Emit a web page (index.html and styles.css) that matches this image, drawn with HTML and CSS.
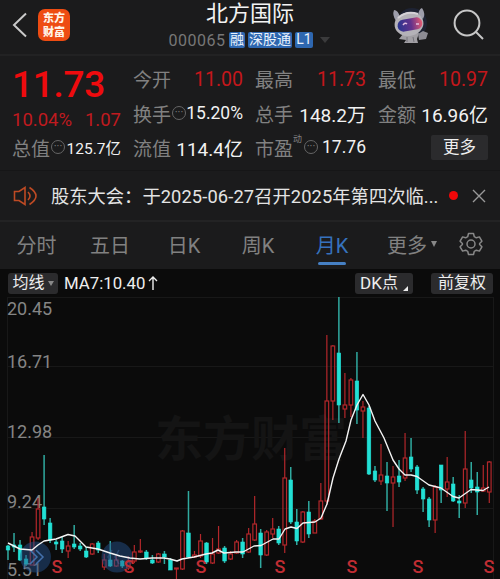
FILE: index.html
```html
<!DOCTYPE html>
<html lang="zh-CN">
<head>
    <meta charset="UTF-8">
    <meta name="viewport" content="width=device-width, initial-scale=1.0">
    <title>北方国际 000065</title>
    <link rel="stylesheet" href="styles.css">
</head>
<body>
<div class="app">
    <header class="header">
        <svg class="back" viewBox="0 0 16 26"><path d="M14 1.5L2 13l12 11.5"/></svg>
        <div class="logo">东方<br>财富</div>
        <div class="title">
            <h1>北方国际</h1>
            <div class="code"><span class="num">000065</span><b>融</b><b>深股通</b><b class="level">L1</b><i class="caret"></i></div>
        </div>
        <svg class="robot" viewBox="0 0 42 40">
            <defs>
                <linearGradient id="visor"><stop offset="0" stop-color="#29358f"/><stop offset=".55" stop-color="#63328c"/><stop offset="1" stop-color="#e65b72"/></linearGradient>
            </defs>
            <circle cx="23" cy="17" r="15" fill="#1e2333"/>
            <path d="M7 15Q3 9 5 4q4 0 6 7M29 9q1-6 4-7 4 6 1 11" fill="#9d9daa"/>
            <path d="M14 28l-4 5 7 1-2 3h14l-1-4 2-6z" fill="#a19fa4"/>
            <path d="M29 28l5-3 5 2-2 6-7 1z" fill="#8d8c93"/>
            <ellipse cx="20" cy="18" rx="14.500" ry="12" transform="rotate(-10 20 18)" fill="#b4b2b8"/>
            <path d="M9 12q9-8 20-4" fill="none" stroke="#d4d1d6" stroke-width="2"/>
            <rect x="8.500" y="12.500" width="25" height="12" rx="6" transform="rotate(-10 21 19)" fill="url(#visor)"/>
            <path d="M14 19q2-3 4-1M27 18h3" fill="none" stroke="#e3bee0" stroke-width="1.4"/>
            <path d="M18 31v5M24 31l1 5" stroke="#74737b"/>
        </svg>
        <svg class="search" viewBox="0 0 32 32"><circle cx="14" cy="14" r="12.4"/><path d="M23 23l7 7"/></svg>
    </header>

    <section class="quote">
        <div class="price-col">
            <div class="price">11.73</div>
            <div class="change"><span>10.04%</span><span>1.07</span></div>
            <div class="cell small"><label>总值</label><i class="dots">···</i><span>125.7<em>亿</em></span></div>
        </div>
        <div class="stats">
            <div class="cell red"><label>今开</label><span>11.00</span></div>
            <div class="cell red"><label>最高</label><span>11.73</span></div>
            <div class="cell red"><label>最低</label><span>10.97</span></div>
            <div class="cell mid"><label>换手</label><i class="dots">···</i><span>15.20%</span></div>
            <div class="cell"><label>总手</label><span>148.2<em>万</em></span></div>
            <div class="cell"><label>金额</label><span>16.96<em>亿</em></span></div>
            <div class="cell"><label>流值</label><span>114.4<em>亿</em></span></div>
            <div class="cell mid"><label>市盈<sup>动</sup></label><i class="dots">···</i><span>17.76</span></div>
            <div class="cell"><button class="more">更多</button></div>
        </div>
    </section>

    <section class="notice">
        <svg class="horn" viewBox="0 0 25 20"><path d="M1.500 5.500H6l6-4v17l-6-4H1.500z"/><path d="M15 6q4 4 0 8"/><path d="M16.500 1.500q13 8.500 0 17"/></svg>
        <p>股东大会：于<span>2025-06-27</span>召开<span>2025</span>年第四次临<span>...</span></p>
        <i class="red-dot"></i>
        <svg class="close" viewBox="0 0 14 14"><path d="M1 1l12 12M13 1L1 13"/></svg>
    </section>

    <nav class="tabs">
        <a>分时</a>
        <a>五日</a>
        <a>日K</a>
        <a>周K</a>
        <a class="active">月K</a>
        <a class="tab-more">更多<i class="caret"></i></a>
        <svg class="gear" viewBox="0 0 24 24"><path d="M9.500 1.500h5l.8 3.200 2 1.100 3.100-.9 2.500 4.300L20.600 11.500v1l2.300 2.300-2.500 4.300-3.100-.9-2 1.100-.8 3.200h-5l-.8-3.200-2-1.100-3.100.9-2.500-4.300 2.300-2.300v-1L1.100 9.200l2.500-4.300 3.100.9 2-1.100z"/><circle cx="12" cy="12" r="4"/></svg>
    </nav>

    <section class="toolbar">
        <button class="ma-btn">均线<i class="caret"></i></button>
        <span class="ma">MA7:10.40<svg viewBox="0 0 10 14"><path d="M5 14V1M1 5l4-4 4 4"/></svg></span>
        <button class="dk"><span>DK</span>点<i class="corner"></i></button>
        <button class="adj">前复权</button>
    </section>

    <svg class="chart" viewBox="0 297 500 282">
        <path class="grid" d="M7 297.500H493M7 366.500H493M7 437.500H493M7 508.500H493M7.500 297V579M493.500 297V579"/>
        <text class="watermark" x="155" y="456">东方财富</text>
        <g class="scale">
            <text x="7" y="315">20.45</text>
            <text x="7" y="368">16.71</text>
            <text x="7" y="438">12.98</text>
            <text x="7" y="508">9.24</text>
            <text x="7" y="576">5.51</text>
        </g>
        <g id="candles"></g>
        <g class="marker">
            <circle cx="35.500" cy="557" r="15.500"/>
            <circle cx="117" cy="557" r="15.500"/>
            <path d="M30 550l7 7-7 7M36 550l7 7-7 7"/>
            <path d="M112 550l-4 7 4 7M119 550l-4 7 4 7" opacity=".4"/>
        </g>
        <polyline class="ma-line" points="8,543 14,546 20,549 32,550 38,545 44,541 56,539 68,534.500 75,536 80,541 86,547 98,549 110,553 120,556 130,558 140,559 152,558 164,558 170,559 177,561 182,559 194,557 206,554 212,553 218,550 224,553 236,552 243,552 254,546 261,545.500 273,539 279,539 285,529 291,527 297,528.500 303,523 315,522 321,518 327,504 333,478 339,459 346,441 351,420 357,405 363,394.500 369,405 375,421 384,438 393,460 399,469 405,475 411,475 417,476.500 429,485 441,488 453,496.500 459,498 471,489.500 483,490.500 489,487"/>
        <g class="signals">
            <text x="57" y="573">S</text>
            <text x="129" y="573">S</text>
            <text x="201" y="573">S</text>
            <text x="280" y="573">S</text>
            <text x="352" y="573">S</text>
            <text x="418" y="573">S</text>
            <text x="489" y="573">S</text>
        </g>
    </svg>
</div>
<script>
    // [wick top, body top, body bottom, wick bottom, rising]
    const candles = [
        [545,546,550,560,0],[533,545,547,552,0],[540,545,560,561,0],[555,559,564,566,0],
        [532,537,565,565,1],[498,509,538,540,1],[455,507,519,525,0],[518,523,540,543,0],
        [540,542,544,550,0],[537,541,549,553,0],[541,546,551,558,1],[525,544,547,549,0],
        [543,546,549,551,0],[547,551,557,558,0],[543,544,554,555,1],[541,543,550,553,0],
        [554,560,567,570,1],[541,560,566,567,0],[556,560,566,567,1],[560,561,566,568,0],
        [556,562,568,570,1],[545,552,561,563,1],[539,551,552,553,1],[550,552,558,560,0],
        [555,560,563,564,0],[553,554,562,563,1],[551,554,557,564,0],[558,560,570,570,0],
        [568,568,569,579,1],[530,531,569,570,1],[491,533,557,558,0],[551,555,557,558,1],
        [534,541,556,558,1],[542,543,562,564,0],[538,554,563,564,1],[526,549,553,554,1],
        [546,548,561,563,0],[551,554,559,560,1],[540,542,553,554,1],[538,542,554,558,0],
        [528,534,552,553,1],[496,524,540,541,1],[529,533,555,568,0],[530,532,555,556,1],
        [518,529,534,538,1],[526,529,543,545,0],[448,478,545,553,1],[467,480,522,524,0],
        [509,522,541,545,0],[511,512,542,543,1],[501,512,534,538,0],[519,521,533,533,1],
        [483,501,519,520,1],[335,401,501,505,1],[345,346,401,420,1],[297,353,405,423,0],
        [373,405,409,418,1],[378,380,405,417,1],[352,381,410,424,0],[401,407,411,438,1],
        [406,408,474,475,0],[466,471,480,482,0],[444,475,481,485,1],[462,476,483,511,0],
        [466,477,483,527,1],[460,476,482,487,0],[433,458,478,481,1],[438,457,469,472,0],
        [465,467,490,494,0],[487,489,499,512,0],[497,499,520,527,0],[485,487,520,533,1],
        [465,465,490,503,0],[457,482,489,497,1],[477,484,501,502,0],[495,501,503,518,0],
        [431,469,503,508,1],[462,480,488,493,0],[472,487,492,515,0],[465,488,491,492,1],
        [461,462,492,503,1]
    ];
    const step = 6.016;
    document.getElementById('candles').innerHTML = candles.map(([high, top, bottom, low, up], i) => {
        const x = 8 + i * step;
        return `<g class="${up ? 'up' : 'down'}">
            <path d="M${x} ${high}V${top}M${x} ${bottom}V${low}"/>
            <rect x="${x - 1.8}" y="${top}" width="3.6" height="${bottom - top}"/>
        </g>`;
    }).join('');
</script>
</body>
</html>
```
FILE: styles.css
```css
* {
    box-sizing: border-box;
}
body {
    margin: 0;
    background: #0b0b0b;
    color: #eee;
    font-family: Roboto, "Noto Sans CJK SC", sans-serif;
}
h1, p {
    margin: 0;
    font-weight: 400;
}
i, em {
    font-style: normal;
}
svg {
    display: block;
    fill: none;
    flex: none;
}
button {
    border: 0;
    padding: 0;
    background: #2b2b2d;
    color: #eee;
    font-family: inherit;
}
.app {
    width: 500px;
    height: 579px;
    overflow: hidden;
}
.caret {
    width: 0;
    height: 0;
    border: 4px solid transparent;
    border-top: 6px solid #888;
    border-bottom: 0;
}

/* header */
.header {
    height: 56px;
    display: flex;
    background: #1b1b1c;
    border-bottom: 2px solid #222223;
}
.back {
    width: 16px;
    height: 26px;
    margin: 12px 0 0 12px;
    stroke: #c9c9c9;
    stroke-width: 2;
}
.logo {
    width: 32px;
    height: 32px;
    margin: 9px 0 0 10px;
    padding-top: 1px;
    border-radius: 7px;
    background: #ee4c12;
    text-align: center;
    color: #fff3e8;
    font: 900 11px/14px "Noto Sans CJK SC", sans-serif;
}
.title {
    width: 180px;
    margin-left: 90px;
    text-align: center;
}
.title h1 {
    height: 29px;
    font-size: 22px;
    line-height: 27px;
    color: #f3f3f3;
}
.code {
    display: flex;
    height: 22px;
    align-items: center;
    margin-left: 8px;
    color: #777;
}
.code .num {
    width: 58px;
    margin-right: 3px;
    font-size: 16px;
    letter-spacing: .5px;
}
.code b {
    height: 16px;
    margin-right: 3px;
    padding: 0 1px;
    border-radius: 2px;
    background: #2e67b0;
    color: #e9f1fb;
    font-size: 14px;
    font-weight: 400;
    line-height: 15px;
}
.code .level {
    width: 18px;
}
.code .caret {
    margin-left: 4px;
    border-width: 6px 5px 0;
    border-top-color: #3b3b3c;
}
.robot {
    width: 42px;
    height: 40px;
    margin: 6px 0 0 49px;
}
.search {
    width: 32px;
    height: 32px;
    margin: 9px 0 0 22px;
    stroke: #c7c7c7;
    stroke-width: 2;
}

/* quote */
.quote {
    height: 115px;
    display: flex;
    gap: 12px;
    padding: 5px 12px 0;
    background: #1b1b1c;
    border-bottom: 1px solid #161617;
}
.price-col {
    width: 110px;
}
.price {
    height: 45px;
    color: #ef0b0e;
    font-size: 37px;
    font-weight: 500;
    line-height: 48px;
    letter-spacing: -.3px;
    white-space: nowrap;
}
.change {
    height: 24px;
    display: flex;
    justify-content: space-between;
    color: #c01a1f;
    font-size: 18.500px;
    line-height: 28px;
}
.stats {
    flex: 1;
    display: grid;
    grid-template-columns: 110px 111px 110px;
    grid-template-rows: 35px 34px 34px;
    column-gap: 12px;
}
.cell {
    display: flex;
    align-items: center;
    height: 34px;
    white-space: nowrap;
}
.cell label {
    color: #818181;
    font-size: 19px;
    position: relative;
}
.cell span {
    margin-left: auto;
    color: #f2f2f2;
    font-size: 19px;
}
.cell em {
    font-size: 19px;
}
.cell.red span {
    padding-top: 2px;
    color: #c4171b;
    font-size: 19.500px;
}
.cell.mid span {
    font-size: 17.500px;
}
.cell.small span, .cell.small em {
    font-size: 15.500px;
}
.cell sup {
    position: absolute;
    left: 38px;
    top: 0;
    font-size: 9px;
    line-height: 10px;
}
.dots {
    width: 14px;
    height: 14px;
    margin-left: 1px;
    border: 1px solid #666;
    border-radius: 50%;
    color: #808080;
    font-size: 11px;
    line-height: 11px;
    text-align: center;
}
label:has(sup) + .dots {
    margin-left: 11px;
}
.more {
    width: 57px;
    height: 25px;
    margin-left: auto;
    border-radius: 2px;
    font-size: 16.500px;
    line-height: 23px;
}

/* notice */
.notice {
    height: 49px;
    display: flex;
    align-items: center;
    padding: 0 14px 2px 13px;
    background: #1b1b1c;
}
.horn {
    width: 25px;
    height: 20px;
    margin: 2px 13px 0 0;
    stroke: #bd4a24;
    stroke-width: 1.6;
}
.notice p {
    width: 389px;
    color: #e4e4e4;
    font-size: 18.300px;
    white-space: nowrap;
}
.notice p span {
    letter-spacing: .12px;
}
.red-dot {
    width: 9px;
    height: 9px;
    margin: 2px 14px 0 9px;
    border-radius: 50%;
    background: #f10709;
    flex: none;
}
.close {
    width: 14px;
    height: 14px;
    margin-top: 2px;
    stroke: #999;
    stroke-width: 1.4;
}

/* period tabs */
.tabs {
    height: 49px;
    display: grid;
    grid-template-columns: 73px 74px 74px 74px 74px 86px 24px;
    align-items: center;
    background: #1b1b1c;
    border-top: 2px solid #232324;
}
.tabs a {
    height: 47px;
    display: flex;
    justify-content: center;
    align-items: center;
    position: relative;
    padding-bottom: 3px;
    color: #818181;
    font-size: 20px;
}
.tabs .active {
    color: #3672bd;
}
.tabs .active::after {
    content: "";
    position: absolute;
    left: 23px;
    bottom: 4px;
    width: 28px;
    height: 3px;
    border-radius: 2px;
    background: #4680c4;
}
.tab-more .caret {
    margin-left: 4px;
    border-width: 6px 3px 0;
}
.gear {
    width: 24px;
    height: 24px;
    margin: -3px 0 0 4px;
    stroke: #888;
    stroke-width: 1.5;
    stroke-linejoin: round;
}

/* chart toolbar */
.toolbar {
    height: 28px;
    display: flex;
    align-items: center;
    padding: 0 7px 0 8px;
    background: #0b0b0b;
}
.toolbar button {
    height: 21px;
    border-radius: 3px;
    font-size: 16px;
    line-height: 20px;
    display: flex;
    align-items: center;
    justify-content: center;
}
.ma-btn {
    width: 50px;
}
.ma-btn .caret {
    margin-left: 3px;
    border-width: 5px 3px 0;
}
.ma {
    display: flex;
    align-items: center;
    margin-left: 6px;
    font-size: 16.800px;
}
.ma svg {
    width: 10px;
    height: 14px;
    margin-left: 3px;
    stroke: #eee;
    stroke-width: 1.4;
}
.toolbar .dk {
    width: 58px;
    margin: 0 18px 0 auto;
}
.dk span {
    font-size: 17px;
}
.corner {
    align-self: flex-end;
    margin: 0 0 3px 5px;
    border-left: 5px solid transparent;
    border-bottom: 5px solid #eee;
}
.toolbar .adj {
    width: 62px;
}

/* chart */
.chart {
    width: 500px;
    height: 282px;
}
.grid {
    stroke: #181818;
}
.watermark {
    fill: #141414;
    font: 700 48px "Noto Sans CJK SC", sans-serif;
}
.scale {
    fill: #858585;
    font-size: 18px;
}
.up path, .up rect {
    stroke: #b3272b;
    stroke-width: 1.2;
}
.down path {
    stroke: #30aaa0;
    stroke-width: 1.5;
}
.down rect {
    fill: #22e0d5;
    stroke: #22e0d5;
    stroke-width: .6;
}
.marker circle {
    fill: #234f88;
    opacity: .5;
}
.marker path {
    stroke: #4471ac;
    stroke-width: 1.5;
}
.ma-line {
    stroke: #f4f4f4;
    stroke-width: 1.4;
    stroke-linejoin: round;
}
.signals {
    fill: #c02d33;
    font-size: 18px;
    font-weight: 500;
    text-anchor: middle;
}
```
